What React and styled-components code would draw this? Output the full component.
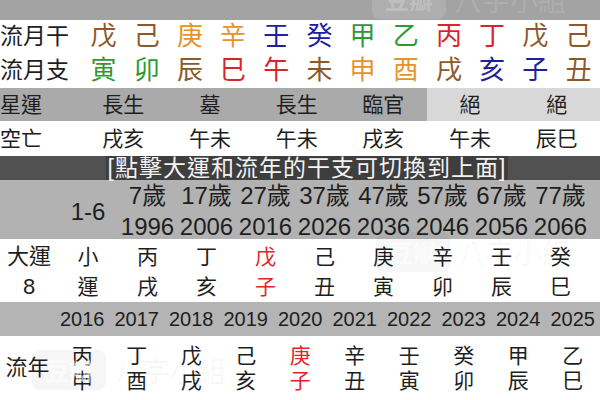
import React from 'react';
import styled, { createGlobalStyle } from 'styled-components';

const GlobalStyle = createGlobalStyle`
  html, body {
    margin: 0;
    padding: 0;
    background: #fff;
  }
  body {
    font-family: "Liberation Sans", "Noto Sans CJK TC", sans-serif;
    color: #1e1e1e;
  }
`;

const ELEMENT = {
  wood: '#2e9a36',
  fire: '#d6262c',
  earth: '#8c5a2a',
  metal: '#e8922a',
  water: '#20209c',
};

const STEMS = [
  ['戊', 'earth'], ['己', 'earth'], ['庚', 'metal'], ['辛', 'metal'],
  ['壬', 'water'], ['癸', 'water'], ['甲', 'wood'], ['乙', 'wood'],
  ['丙', 'fire'], ['丁', 'fire'], ['戊', 'earth'], ['己', 'earth'],
];

const BRANCHES = [
  ['寅', 'wood'], ['卯', 'wood'], ['辰', 'earth'], ['巳', 'fire'],
  ['午', 'fire'], ['未', 'earth'], ['申', 'metal'], ['酉', 'metal'],
  ['戌', 'earth'], ['亥', 'water'], ['子', 'water'], ['丑', 'earth'],
];

const STAR_LUCK = [
  ['長生', 'mid'], ['墓', 'mid'], ['長生', 'mid'], ['臨官', 'mid'], ['絕', 'light'], ['絕', 'light'],
];

const VOID = ['戌亥', '午未', '午未', '戌亥', '午未', '辰巳'];

const DECADES = [
  { age: '7歲', year: '1996', pillar: '丙戌' },
  { age: '17歲', year: '2006', pillar: '丁亥' },
  { age: '27歲', year: '2016', pillar: '戊子', active: true },
  { age: '37歲', year: '2026', pillar: '己丑' },
  { age: '47歲', year: '2036', pillar: '庚寅' },
  { age: '57歲', year: '2046', pillar: '辛卯' },
  { age: '67歲', year: '2056', pillar: '壬辰' },
  { age: '77歲', year: '2066', pillar: '癸巳' },
];

const YEARS = [
  ['2016', '丙申'], ['2017', '丁酉'], ['2018', '戊戌'], ['2019', '己亥'], ['2020', '庚子', true],
  ['2021', '辛丑'], ['2022', '壬寅'], ['2023', '癸卯'], ['2024', '甲辰'], ['2025', '乙巳'],
];

const Page = styled.div`
  position: relative;
  width: 600px;
  height: 400px;
  overflow: hidden;
  background: #fff;
`;

const TopBar = styled.div`
  height: 20px;
  background: #a3a3a3;
`;

const MonthGrid = styled.div`
  display: grid;
  grid-template-columns: 82px repeat(12, 1fr);
  grid-auto-rows: 34px;
  align-items: center;
  background: #fff;
`;

const RowLabel = styled.div`
  font-size: ${props => props.$size || 23}px;
  line-height: 1;
  white-space: nowrap;
  margin-top: -2px;
`;

const Glyph = styled.div`
  font-size: 26px;
  line-height: 1;
  text-align: center;
  margin-top: -2px;
  color: ${props => props.$color};
`;

const StatusGrid = styled.div`
  display: grid;
  grid-template-columns: 80px repeat(6, 1fr);
  height: ${props => props.$height}px;
  background: ${props => props.$bg || '#fff'};
`;

const StatusCell = styled.div`
  display: flex;
  align-items: center;
  justify-content: ${props => (props.$label ? 'flex-start' : 'center')};
  font-size: 21px;
  line-height: 1;
  background: ${props => (props.$shade === 'light' ? '#d8d8d8' : props.$shade === 'mid' ? '#aaaaaa' : 'transparent')};
`;

const Notice = styled.div`
  display: flex;
  justify-content: center;
  align-items: stretch;
  height: 24px;
  padding-left: 14px;
  background: #515151;
`;

const NoticeText = styled.span`
  display: flex;
  align-items: center;
  padding: 0 2px;
  background: #3e3e3e;
  color: #f3f3f3;
  font-size: 23px;
  letter-spacing: 1px;
  line-height: 1;
  white-space: nowrap;
`;

const LuckGrid = styled.div`
  display: grid;
  grid-template-columns: 58px 60px repeat(8, 59px);
  height: ${props => props.$height}px;
  background: ${props => props.$bg};
`;

const AgeCell = styled.div`
  display: flex;
  flex-direction: column;
  align-items: center;
  justify-content: center;
  font-size: 24px;
  line-height: 31px;
  white-space: nowrap;
`;

const PillarCell = styled.div`
  display: flex;
  flex-direction: column;
  align-items: center;
  justify-content: ${props => (props.$top ? 'flex-start' : 'center')};
  padding-top: ${props => (props.$top ? props.$top : 0)}px;
  font-size: ${props => props.$size || 21}px;
  line-height: ${props => props.$lh || 30}px;
  color: ${props => (props.$active ? '#e0262a' : '#1e1e1e')};
  white-space: nowrap;
`;

const YearGrid = styled.div`
  display: grid;
  grid-template-columns: 55px repeat(10, 1fr);
  height: ${props => props.$height}px;
  background: ${props => props.$bg};
  align-items: ${props => props.$align || 'stretch'};
`;

const YearCell = styled.div`
  text-align: center;
  font-size: 20px;
  line-height: 1;
`;

const Watermark = styled.div`
  position: absolute;
  top: ${props => props.$top}px;
  left: ${props => props.$left}px;
  display: flex;
  align-items: center;
  gap: 8px;
  pointer-events: none;
  color: ${props => props.$tone};
  font-family: "Noto Sans CJK TC", sans-serif;
  font-size: 28px;
  line-height: 1;
  white-space: nowrap;
`;

const WatermarkBadge = styled.span`
  display: flex;
  align-items: center;
  justify-content: center;
  width: 74px;
  height: 40px;
  border-radius: 8px;
  background: ${props => props.$tone};
  color: ${props => props.$ink};
  font-size: 24px;
  font-weight: 700;
`;

function Mark({ top, left, tone, ink }) {
  return (
    <Watermark $top={top} $left={left} $tone={tone} aria-hidden="true">
      <WatermarkBadge $tone={tone} $ink={ink}>豆瓣</WatermarkBadge>
      <span>八字小組</span>
    </Watermark>
  );
}

function Pillar({ text, active, ...rest }) {
  return (
    <PillarCell $active={active} {...rest}>
      <span>{text[0]}</span>
      <span>{text[1]}</span>
    </PillarCell>
  );
}

export default function App() {
  return (
    <Page>
      <GlobalStyle />
      <TopBar />

      <MonthGrid>
        <RowLabel>流月干</RowLabel>
        {STEMS.map(([c, el], i) => (
          <Glyph key={`s${i}`} $color={ELEMENT[el]}>{c}</Glyph>
        ))}
        <RowLabel>流月支</RowLabel>
        {BRANCHES.map(([c, el], i) => (
          <Glyph key={`b${i}`} $color={ELEMENT[el]}>{c}</Glyph>
        ))}
      </MonthGrid>

      <StatusGrid $height={33}>
        <StatusCell $label $shade="mid">星運</StatusCell>
        {STAR_LUCK.map(([t, shade], i) => (
          <StatusCell key={i} $shade={shade}>{t}</StatusCell>
        ))}
      </StatusGrid>

      <StatusGrid $height={35}>
        <StatusCell $label>空亡</StatusCell>
        {VOID.map((t, i) => (
          <StatusCell key={i}>{t}</StatusCell>
        ))}
      </StatusGrid>

      <Notice>
        <NoticeText>[點擊大運和流年的干支可切換到上面]</NoticeText>
      </Notice>

      <LuckGrid $height={59} $bg="#b2b2b2">
        <div />
        <AgeCell>1-6</AgeCell>
        {DECADES.map(d => (
          <AgeCell key={d.year}>
            <span>{d.age}</span>
            <span>{d.year}</span>
          </AgeCell>
        ))}
      </LuckGrid>

      <LuckGrid $height={63} $bg="#fff">
        <PillarCell $top={3} $size={22}>
          <span>大運</span>
          <span>8</span>
        </PillarCell>
        <Pillar text="小運" $top={3} />
        {DECADES.map(d => (
          <Pillar key={d.year} text={d.pillar} active={d.active} $top={3} />
        ))}
      </LuckGrid>

      <YearGrid $height={34} $bg="#b4b4b4" $align="center">
        <div />
        {YEARS.map(([y]) => (
          <YearCell key={y}>{y}</YearCell>
        ))}
      </YearGrid>

      <YearGrid $height={63} $bg="#fff">
        <PillarCell $size={22}>流年</PillarCell>
        {YEARS.map(([y, p, active]) => (
          <Pillar key={y} text={p} active={active} $top={7} $lh={25} />
        ))}
      </YearGrid>

      <Mark top={-21} left={372} tone="rgba(255,255,255,0.12)" ink="rgba(255,255,255,0.22)" />
      <Mark top={232} left={376} tone="rgba(0,0,0,0.03)" ink="rgba(255,255,255,0.5)" />
      <Mark top={350} left={32} tone="rgba(0,0,0,0.035)" ink="rgba(255,255,255,0.6)" />
    </Page>
  );
}
